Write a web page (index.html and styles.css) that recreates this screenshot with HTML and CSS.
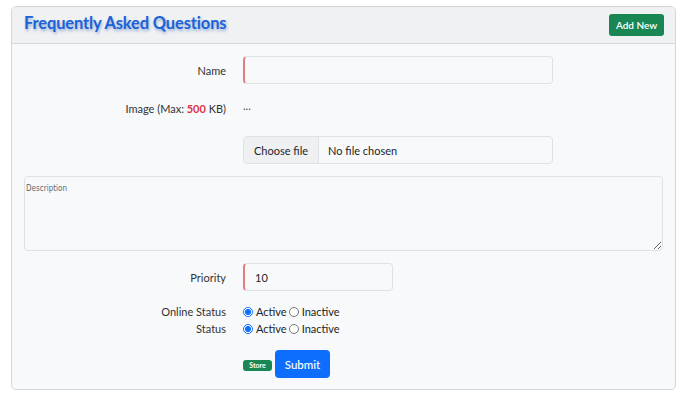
FILE: index.html
```html
<!DOCTYPE html>
<html>
<head>
<meta charset="utf-8">
<link rel="stylesheet" href="styles.css">
</head>
<body>
<div class="card">
  <div class="card-header">
    <h1 class="title">Frequently Asked Questions</h1>
    <button class="btn-add">Add New</button>
  </div>
  <div class="card-body">
    <div class="row row-name">
      <label class="lbl">Name</label>
      <div class="ctl"><input class="input input-wide invalid" type="text"></div>
    </div>
    <div class="row row-image">
      <label class="lbl">Image (Max: <b class="red">500</b> KB)</label>
      <div class="ctl"><span class="dots">...</span></div>
    </div>
    <div class="row row-file">
      <div class="lbl"></div>
      <div class="ctl">
        <div class="file input-wide">
          <span class="file-btn">Choose file</span>
          <span class="file-name">No file chosen</span>
        </div>
      </div>
    </div>
    <textarea class="desc" placeholder="Description"></textarea>
    <div class="row row-priority">
      <label class="lbl">Priority</label>
      <div class="ctl"><input class="input input-narrow invalid" type="text" value="10"></div>
    </div>
    <div class="row row-radio first">
      <label class="lbl">Online Status</label>
      <div class="ctl radios">
        <input type="radio" name="os" checked><span class="rt">Active</span>
        <input type="radio" name="os"><span class="rt">Inactive</span>
      </div>
    </div>
    <div class="row row-radio">
      <label class="lbl">Status</label>
      <div class="ctl radios">
        <input type="radio" name="st" checked><span class="rt">Active</span>
        <input type="radio" name="st"><span class="rt">Inactive</span>
      </div>
    </div>
    <div class="row row-actions">
      <div class="lbl"></div>
      <div class="ctl actions">
        <span class="badge">Store</span>
        <button class="btn-submit">Submit</button>
      </div>
    </div>
  </div>
</div>
</body>
</html>
```
FILE: styles.css
```css
* { box-sizing: border-box; }
html, body { margin: 0; padding: 0; }
body {
  background: #ffffff;
  font-family: "Lato", "Noto Sans", sans-serif;
  font-size: 11px;
  color: #212529;
  padding: 6px 8px 0 11px;
}
.card {
  width: 665px;
  height: 384px;
  border: 1px solid #d4d6d9;
  border-radius: 5px;
  background: #f8f9fa;
  overflow: hidden;
}
.card-header {
  height: 37px;
  background: #f0f1f3;
  border-bottom: 1px solid #d4d6d9;
  display: flex;
  align-items: center;
  justify-content: space-between;
  padding: 0 11px 0 12px;
}
.title {
  margin: 0;
  font-size: 16.5px;
  font-weight: 700;
  color: #1a62d6;
  text-shadow: 1px 2px 3px rgba(40, 90, 180, 0.45);
  letter-spacing: -0.15px;
  position: relative;
  top: -2px;
}
.btn-add {
  font-family: inherit;
  background: #198754;
  color: #fff;
  border: none;
  border-radius: 3px;
  font-size: 10px;
  font-weight: 600;
  height: 22px;
  width: 55px;
  padding: 0;
}
.card-body {
  padding: 12px 12px 0 12px;
}
.row {
  display: flex;
  align-items: center;
}
.lbl {
  width: 202px;
  flex: none;
  text-align: right;
  margin-right: 17px;
  color: #333;
  font-size: 11px;
}
.red { color: #dc3545; font-weight: 700; }
.ctl { display: flex; align-items: center; }
.input {
  font-family: inherit;
  font-size: 11px;
  height: 28px;
  border: 1px solid #dee2e6;
  border-radius: 4px;
  background: #f8f9fa;
  padding: 0 10px;
  color: #212529;
  outline: none;
}
.invalid { border-left: 2px solid #e27d86; }
.input-wide { width: 310px; }
.input-narrow { width: 150px; }
.row-name { height: 28px; }
.row-image { height: 24px; margin-top: 12px; }
.dots { position: relative; top: -3px; color: #444; }
.row-file { height: 28px; margin-top: 16px; }
.file {
  display: flex;
  height: 28px;
  border: 1px solid #dee2e6;
  border-radius: 4px;
  overflow: hidden;
  align-items: stretch;
}
.file-btn {
  display: flex;
  align-items: center;
  padding: 0 10px;
  background: #eef0f2;
  border-right: 1px solid #dee2e6;
  white-space: nowrap;
}
.file-name {
  display: flex;
  align-items: center;
  padding-left: 9px;
  background: #f8f9fa;
  white-space: nowrap;
}
.desc {
  display: block;
  width: 639px;
  height: 75px;
  margin: 12px 0 0 0;
  border: 1px solid #dee2e6;
  border-radius: 4px;
  background: #f8f9fa;
  font-family: "DejaVu Sans Condensed", "DejaVu Sans", sans-serif;
  font-size: 8px;
  padding: 7px 1px;
  resize: vertical;
  outline: none;
}
.desc::placeholder { color: #666; }
.row-priority { height: 28px; margin-top: 12px; }
.row-radio { height: 17px; }
.row-radio.first { margin-top: 12px; }
.radios input {
  margin: 0;
  width: 10px;
  height: 10px;
  accent-color: #0d6efd;
}
.rt { margin: 0 2px 0 3px; }
.row-actions { height: 28px; margin-top: 13px; }
.actions { gap: 3px; }
.badge {
  background: #198754;
  color: #fff;
  font-size: 7px;
  font-weight: 700;
  border-radius: 3px;
  height: 11px;
  width: 29px;
  display: flex;
  align-items: center;
  justify-content: center;
  position: relative;
  top: 1px;
}
.btn-submit {
  font-family: inherit;
  background: #0d6efd;
  color: #fff;
  border: none;
  border-radius: 4px;
  font-size: 11.5px;
  font-weight: 500;
  height: 28px;
  width: 55px;
  padding: 0;
}
```
